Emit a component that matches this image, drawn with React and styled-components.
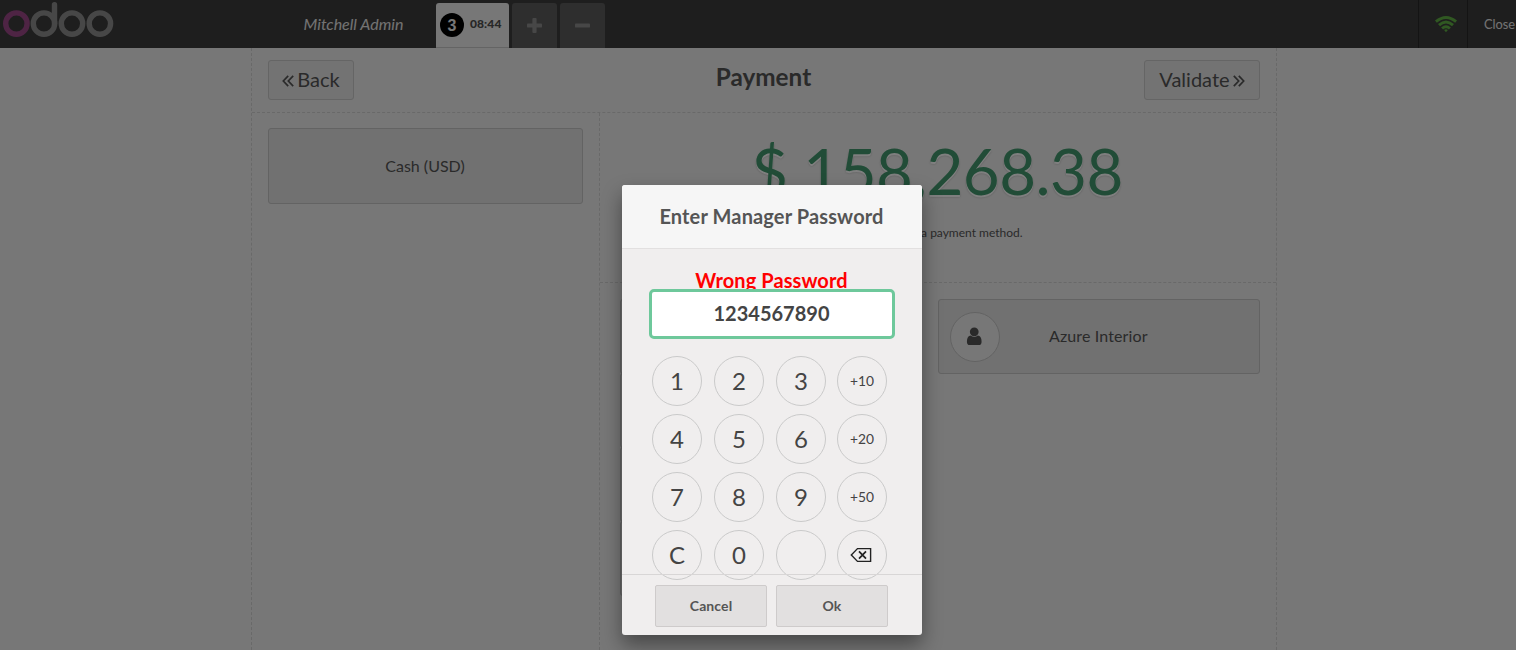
import React from "react";
import styled, { createGlobalStyle } from "styled-components";

const GlobalStyle = createGlobalStyle`
  * { box-sizing: border-box; }
  html, body { margin: 0; padding: 0; }
  body {
    background: #eeeeee;
    color: #555555;
    font-family: Lato, "Open Sans", sans-serif;
    overflow: hidden;
  }
`;

const Page = styled.div`
  position: relative;
  height: 650px;
  width: 100%;
  display: flex;
  flex-direction: column;
  overflow: hidden;
`;

const TopBar = styled.header`
  flex: none;
  height: 48px;
  display: flex;
  background: #3c3c3c;
  color: #e6e6e6;
`;

const Brand = styled.div`
  width: 303.5px;
`;

const UserName = styled.div`
  width: 132.5px;
  font-size: 16px;
  font-style: italic;
  line-height: 48px;
  white-space: nowrap;
`;

const Orders = styled.div`
  flex: 1;
  display: flex;
  align-items: flex-end;
  gap: 3px;
`;

const OrderTab = styled.div`
  width: 73px;
  height: 45px;
  padding-left: 4px;
  display: flex;
  align-items: center;
  gap: 6px;
  background: #eeeeee;
  border-radius: 3px 3px 0 0;
  border-bottom: 1px solid #c8c8c8;
  color: #4e4e4e;
  font-size: 12px;
  font-weight: 900;
`;

const OrderNumber = styled.span`
  width: 24px;
  height: 24px;
  border-radius: 50%;
  background: #000;
  color: #eee;
  font: bold 16px/25px "Liberation Sans", sans-serif;
  text-align: center;
`;

const OrderTime = styled.span`
  padding-bottom: 3px;
  letter-spacing: 0.1px;
`;

const SquareButton = styled.div`
  width: 45px;
  height: 45px;
  padding-bottom: 1px;
  display: flex;
  align-items: center;
  justify-content: center;
  background: #5c5c5c;
  border-radius: 3px 3px 0 0;
`;

const StatusItem = styled.div`
  width: ${(p) => p.$width}px;
  border-left: 1px solid #292929;
  padding-left: ${(p) => p.$indent}px;
  font-size: 12.8px;
  line-height: 48px;
  white-space: nowrap;
  svg { display: block; margin-top: 15px; }
`;

const Screen = styled.main`
  flex: 1;
  width: 1026px;
  margin-left: 251px;
  border: 1px dashed #d2d2d2;
  border-width: 0 1px;
  display: flex;
  flex-direction: column;
`;

const ScreenHeader = styled.div`
  height: 65px;
  padding: 12px 16px;
  display: flex;
  justify-content: space-between;
  border-bottom: 1px dashed #d2d2d2;
`;

const NavButton = styled.div`
  width: ${(p) => p.$width}px;
  height: 40px;
  padding-bottom: 2px;
  display: flex;
  align-items: center;
  justify-content: center;
  gap: 3px;
  background: #e6e6e6;
  border: 1px solid #cacaca;
  border-radius: 3px;
  font-size: 20px;
  svg { margin-top: 3px; }
`;

const Title = styled.h1`
  margin: 0;
  padding-left: 29px;
  font-size: 24.3px;
  font-weight: 700;
  line-height: 34px;
`;

const Columns = styled.div`
  flex: 1;
  display: flex;
`;

const Methods = styled.div`
  width: 348px;
  padding: 15px 16px;
  border-right: 1px dashed #d2d2d2;
`;

const Tile = styled.div`
  height: ${(p) => p.$height}px;
  display: flex;
  align-items: center;
  justify-content: center;
  background: #e2e2e2;
  border: 1px solid #c6c6c6;
  border-radius: 3px;
  font-size: 16px;
`;

const TileLabel = styled.span`
  padding: 0 1px 2px 0;
  letter-spacing: ${(p) => p.$spacing || 0}px;
`;

const Details = styled.div`
  flex: 1;
  display: flex;
  flex-direction: column;
`;

const Due = styled.div`
  height: 170px;
  border-bottom: 1px dashed #d2d2d2;
  text-align: center;
`;

const Total = styled.div`
  padding: 20px 2px 0 0;
  font-size: 63.6px;
  letter-spacing: -0.5px;
  line-height: 76px;
  color: #43996e;
  text-shadow: 0 2px #fff, 0 2px 2px rgba(0, 0, 0, 0.27);
`;

const Hint = styled.div`
  margin-top: 15px;
  padding-right: 3px;
  font-size: 12px;
  line-height: 18px;
`;

const Actions = styled.div`
  padding: 16px 16px 0 20px;
  display: flex;
  gap: 16px;
  align-items: flex-start;
`;

const PadColumn = styled.div`
  width: 302px;
  ${Tile} { margin-bottom: -1px; }
`;

const Customer = styled(Tile)`
  flex: 1;
  justify-content: flex-start;
  padding-left: 11px;
`;

const Avatar = styled.div`
  width: 50px;
  height: 50px;
  margin-right: 49px;
  padding-right: 1px;
  display: flex;
  align-items: center;
  justify-content: center;
  background: #eeeeee;
  border: 1px solid #c6c6c6;
  border-radius: 50%;
`;

const Overlay = styled.div`
  position: absolute;
  inset: 0;
  padding: 185px 0 0 622px;
  background: rgba(0, 0, 0, 0.5);
`;

const Popup = styled.div`
  width: 300px;
  height: 450px;
  display: flex;
  flex-direction: column;
  background: #f0eeee;
  border-radius: 3px;
  box-shadow: 0 10px 20px rgba(0, 0, 0, 0.4);
  text-align: center;
`;

const PopupTitle = styled.div`
  height: 64px;
  background: #f6f6f6;
  border-bottom: 1px solid #e2e0e0;
  border-radius: 3px 3px 0 0;
  font-size: 20px;
  font-weight: 700;
  letter-spacing: 0.13px;
  line-height: 63px;
  padding-right: 1px;
`;

const PopupBody = styled.div`
  height: 325px;
  padding: 20px 27px 0;
`;

const ErrorText = styled.div`
  height: 20px;
  padding-right: 1px;
  color: #ff0000;
  font-size: 20px;
  font-weight: 700;
  letter-spacing: 0.08px;
  line-height: 22px;
`;

const Field = styled.div`
  position: relative;
  height: 50px;
  padding-right: 1px;
  background: #fff;
  border: 3px solid #6ec89b;
  border-radius: 5px;
  color: #444;
  font-size: 20px;
  font-weight: 700;
  line-height: 43px;
`;

const Keypad = styled.div`
  display: grid;
  grid-template-columns: repeat(3, 62px) 50px;
  grid-auto-rows: 58px;
  margin: 17px 0 0 3px;
`;

const Key = styled.div`
  width: 50px;
  height: 50px;
  padding-bottom: 2px;
  display: flex;
  align-items: center;
  justify-content: center;
  border: 1px solid #cacaca;
  border-radius: 50%;
  color: #444;
  font-size: ${(p) => (p.$small ? 13.8 : 24)}px;
  margin-left: ${(p) => (p.$last ? -1 : 0)}px;
  svg { margin: 1px 2px 0 0; }
`;

const PopupFooter = styled.div`
  height: 61px;
  border-top: 1px solid #d8d6d6;
  padding: 10px 0 0 33px;
  display: flex;
  gap: 9px;
`;

const FooterButton = styled.div`
  width: 112px;
  height: 42px;
  background: #e2e0e0;
  border: 1px solid #cecbcb;
  border-radius: 2px;
  font-size: 14px;
  font-weight: 700;
  letter-spacing: 0.1px;
  line-height: 40px;
`;

const Logo = () => (
  <svg width="118" height="48" viewBox="0 0 118 48" fill="none" strokeWidth="5.4">
    <circle cx="44" cy="23.6" r="10.7" stroke="#8f8f8f" />
    <path d="M54.5 4.8V23.6" stroke="#8f8f8f" strokeLinecap="round" />
    <circle cx="72" cy="23.6" r="10.7" stroke="#8f8f8f" />
    <circle cx="99.9" cy="23.6" r="10.7" stroke="#8f8f8f" />
    <circle cx="16.4" cy="23.6" r="10.7" stroke="#9c4889" />
  </svg>
);

const Sign = ({ plus }) => (
  <svg width="15" height="15" viewBox="0 0 15 15" fill="#8e8e8e">
    <rect x="0" y="5.4" width="15" height="4.2" rx="0.9" />
    {plus && <rect x="5.4" y="0" width="4.2" height="15" rx="0.9" />}
  </svg>
);

const Wifi = () => (
  <svg width="22" height="18" viewBox="0 0 22 18" fill="none" stroke="#60b044" strokeWidth="2.9">
    <path d="M0.9 6.6Q11 -1.8 21.1 6.6" />
    <path d="M4 10.2Q11 4 18 10.2" />
    <path d="M7.1 13.5Q11 9.9 14.9 13.5" />
    <path d="M9.1 15.1Q11 13.5 12.9 15.1L11 17.2Z" fill="#60b044" stroke="none" />
  </svg>
);

const Chevrons = ({ right }) => (
  <svg width="12" height="12" viewBox="0 0 12 12" fill="none" stroke="#555" strokeWidth="1.7">
    <path
      d="M6.2 0.9L1.3 6L6.2 11.1M11.2 0.9L6.3 6L11.2 11.1"
      transform={right ? "matrix(-1 0 0 1 12 0)" : undefined}
    />
  </svg>
);

const Person = () => (
  <svg width="20.5" height="20.5" viewBox="0 0 1792 1792" fill="#555">
    <path d="M1536 1399q0 109-62.5 187t-150.5 78h-854q-88 0-150.5-78t-62.5-187q0-85 8.5-160.5t31.5-152 58.5-131 94-89 134.5-34.5q131 128 313 128t313-128q76 0 134.5 34.5t94 89 58.5 131 31.5 152 8.5 160.5zm-256-887q0 159-112.5 271.5t-271.5 112.5-271.5-112.5-112.5-271.5 112.5-271.5 271.5-112.5 271.5 112.5 112.5 271.5z" />
  </svg>
);

const Backspace = () => (
  <svg width="22" height="16" viewBox="0 0 22 16" fill="none" stroke="#222" strokeWidth="1.4">
    <path d="M7.5 1.6H20.6V14.4H7.5L1.3 8Z" />
    <path d="M9 4.3L16 11.7M16 4.3L9 11.7" strokeWidth="1.7" />
  </svg>
);

const KEYS = ["1", "2", "3", "+10", "4", "5", "6", "+20", "7", "8", "9", "+50", "C", "0", "", "back"];

export default function App() {
  return (
    <Page>
      <GlobalStyle />
      <TopBar>
        <Brand><Logo /></Brand>
        <UserName>Mitchell Admin</UserName>
        <Orders>
          <OrderTab>
            <OrderNumber>3</OrderNumber>
            <OrderTime>08:44</OrderTime>
          </OrderTab>
          <SquareButton><Sign plus /></SquareButton>
          <SquareButton><Sign /></SquareButton>
        </Orders>
        <StatusItem $width={49} $indent={15.5}><Wifi /></StatusItem>
        <StatusItem $width={49} $indent={16}>Close</StatusItem>
      </TopBar>
      <Screen>
        <ScreenHeader>
          <NavButton $width={86}><Chevrons />Back</NavButton>
          <Title>Payment</Title>
          <NavButton $width={116}>Validate<Chevrons right /></NavButton>
        </ScreenHeader>
        <Columns>
          <Methods>
            <Tile $height={76}><TileLabel>Cash (USD)</TileLabel></Tile>
          </Methods>
          <Details>
            <Due>
              <Total>$ 158,268.38</Total>
              <Hint>Please select a payment method.</Hint>
            </Due>
            <Actions>
              <PadColumn>
                {[0, 1, 2, 3].map((n) => <Tile key={n} $height={75} />)}
              </PadColumn>
              <Customer $height={75}>
                <Avatar><Person /></Avatar>
                <TileLabel $spacing={0.12}>Azure Interior</TileLabel>
              </Customer>
            </Actions>
          </Details>
        </Columns>
      </Screen>
      <Overlay>
        <Popup>
          <PopupTitle>Enter Manager Password</PopupTitle>
          <PopupBody>
            <ErrorText>Wrong Password</ErrorText>
            <Field>1234567890</Field>
            <Keypad>
              {KEYS.map((k, i) => (
                <Key key={i} $small={k.startsWith("+")} $last={i % 4 === 3}>
                  {k === "back" ? <Backspace /> : k}
                </Key>
              ))}
            </Keypad>
          </PopupBody>
          <PopupFooter>
            <FooterButton>Cancel</FooterButton>
            <FooterButton>Ok</FooterButton>
          </PopupFooter>
        </Popup>
      </Overlay>
    </Page>
  );
}
